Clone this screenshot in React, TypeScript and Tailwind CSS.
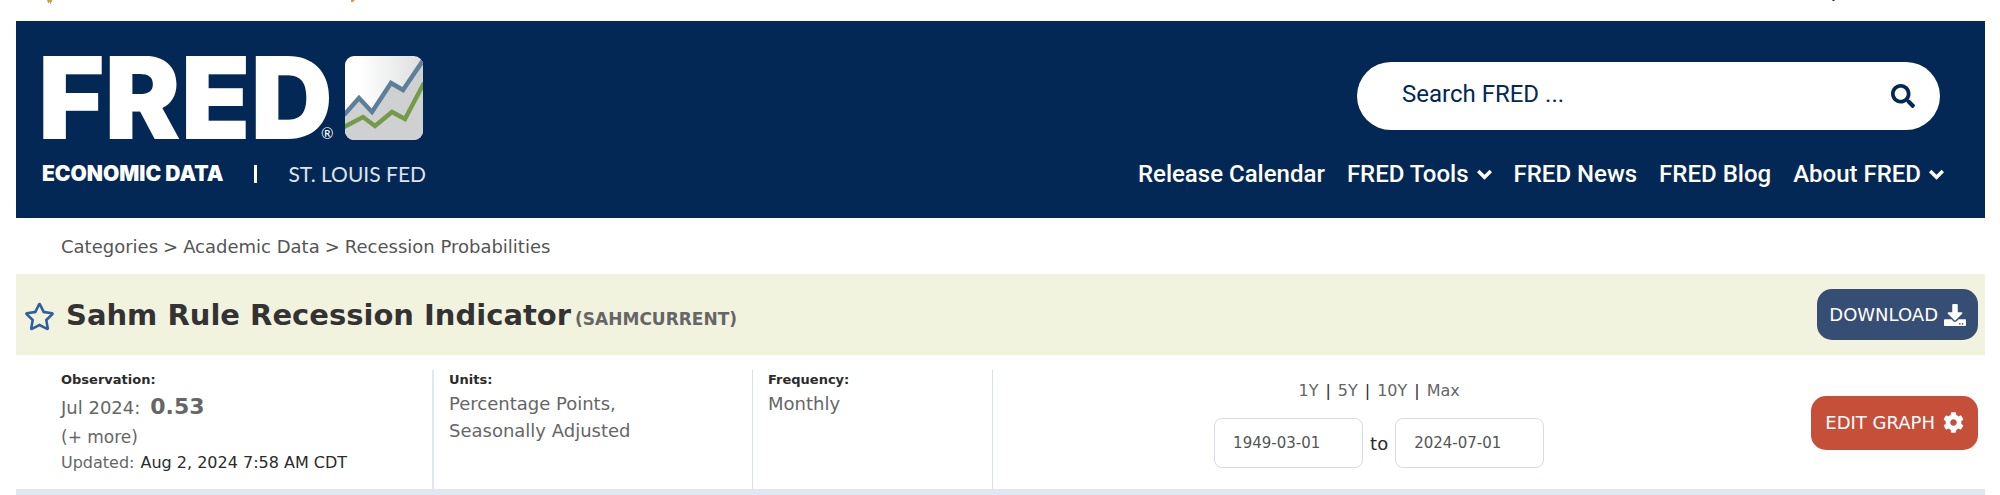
import React from "react";
import { FaSearch, FaDownload, FaCog, FaRegStar } from "react-icons/fa";

const navItems = [
  { label: "Release Calendar", menu: false },
  { label: "FRED Tools", menu: true },
  { label: "FRED News", menu: false },
  { label: "FRED Blog", menu: false },
  { label: "About FRED", menu: true },
];

function TopStrip() {
  return (
    <div className="flex h-[21px] items-start justify-between pr-[150px] pl-[31px]" aria-hidden="true">
      <svg width="308" height="4" viewBox="0 0 308 4" fill="#cf9f45">
        <path d="M0 0h5v2h-1v2h-1v-2h-1v1h-1z" />
        <path d="M304 0h4l-2 2h-2z" />
      </svg>
      <svg width="3" height="2" viewBox="0 0 3 2" fill="#042855">
        <path d="M0 0h3l-1 1h-1z" />
      </svg>
    </div>
  );
}

function Chevron() {
  return (
    <svg width="15" height="11" viewBox="0 0 15 11" fill="none" stroke="currentColor" strokeWidth="3.4" aria-hidden="true">
      <path d="M1.2 2 7.5 8.3 13.8 2" />
    </svg>
  );
}

function ChartMark() {
  return (
    <svg width="78" height="84" viewBox="0 0 78 84" aria-hidden="true">
      <defs>
        <linearGradient id="sky" x1="0" x2="1" y1="0" y2="0">
          <stop offset="0.2" stopColor="#ffffff" />
          <stop offset="1" stopColor="#dcdede" />
        </linearGradient>
        <clipPath id="tile">
          <rect width="78" height="84" rx="9" />
        </clipPath>
      </defs>
      <g clipPath="url(#tile)">
        <rect width="78" height="84" fill="url(#sky)" />
        <path d="M0 58 14 42 27 56 46 27 58 34 78 4V84H0z" fill="#cfd0d2" />
        <path d="M-1 59 14 42 27 56 46 27 58 34 79 3" fill="none" stroke="#5d7f99" strokeWidth="4.4" />
        <path d="M-1 71 18 61 30 70 47 56 60 63 79 27" fill="none" stroke="#739b48" strokeWidth="4.4" />
      </g>
    </svg>
  );
}

function Logo() {
  return (
    <a href="#" className="flex w-[388px] flex-col text-white">
      <span className="flex items-center">
        <span className="w-[283px] font-['Inter',sans-serif] text-[114px] leading-[84px] font-black">FRED</span>
        <span className="self-end font-['Lato',sans-serif] text-[15px] leading-[14px]">®</span>
        <span className="ml-auto pr-[3px]">
          <ChartMark />
        </span>
      </span>
      <span className="mt-[22px] flex items-center justify-between pl-1 leading-6">
        <span className="font-['Inter',sans-serif] text-[21px] font-black">ECONOMIC DATA</span>
        <span className="h-[18px] w-[3px] bg-white" />
        <span className="font-['Lato',sans-serif] text-[21px] text-[#dfe4ea]">ST. LOUIS FED</span>
      </span>
    </a>
  );
}

function Header() {
  return (
    <header className="flex justify-between bg-[#042855] pt-[35px] pr-[41px] pb-8 pl-[22px]">
      <Logo />
      <div className="flex flex-col items-end justify-between pt-[6px] font-['Roboto',sans-serif]">
        <form className="mr-1 flex h-[68px] w-[583px] items-center rounded-full bg-white pr-[25px] pl-[45px] text-[#042855]">
          <input
            type="text"
            aria-label="Search FRED"
            placeholder="Search FRED ..."
            className="min-w-0 flex-1 pb-1 text-[24px] placeholder:text-[#042855] focus:outline-none"
          />
          <button type="button" aria-label="Search">
            <FaSearch size={24} />
          </button>
        </form>
        <nav className="flex gap-[22px] text-[24px] leading-6 font-medium text-white">
          {navItems.map((item) => (
            <a key={item.label} href="#" className="flex items-center gap-2">
              {item.label}
              {item.menu && <Chevron />}
            </a>
          ))}
        </nav>
      </div>
    </header>
  );
}

function Breadcrumb() {
  return (
    <nav aria-label="Breadcrumb" className="flex h-14 items-center gap-[5px] px-[45px] text-[18px] text-[#555]">
      <a href="#">Categories</a>
      <span>&gt;</span>
      <a href="#">Academic Data</a>
      <span>&gt;</span>
      <a href="#">Recession Probabilities</a>
    </nav>
  );
}

function TitleBar() {
  return (
    <div className="flex h-[81px] items-center justify-between bg-[#f2f3de] pr-[7px] pl-2">
      <div className="flex items-center gap-[11px] pt-[3px]">
        <button type="button" aria-label="Add to favorites" className="text-[#2f5f9e]">
          <FaRegStar size={31} />
        </button>
        <h1 className="flex items-baseline gap-1 text-[29px] font-bold text-[#333]">
          Sahm Rule Recession Indicator
          <span className="text-[17px] text-[#666]">(SAHMCURRENT)</span>
        </h1>
      </div>
      <button type="button" className="flex h-[51px] items-center gap-[6px] rounded-[15px] bg-[#374e74] px-3 text-[18px] text-white">
        DOWNLOAD
        <FaDownload size={22} />
      </button>
    </div>
  );
}

function Details() {
  return (
    <section className="flex pt-[15px] pr-[7px] text-[18px] leading-[27px] text-[#666]">
      <div className="w-[418px] border-r-2 border-[#dfe8f0] pb-[13px] pl-[45px]">
        <h2 className="text-[13px] leading-5 font-bold text-[#2b2b2b]">Observation:</h2>
        <p className="flex items-baseline gap-[10px] leading-[34px]">
          Jul 2024: <strong className="text-[22px]">0.53</strong>
        </p>
        <a href="#" className="block text-[17px] leading-6">(+ more)</a>
        <p className="flex gap-[6px] text-[16px]">
          Updated: <span className="text-[#2b2b2b]">Aug 2, 2024 7:58 AM CDT</span>
        </p>
      </div>
      <div className="w-[319px] border-r border-[#d3e2ee] pl-[15px]">
        <h2 className="text-[13px] leading-5 font-bold text-[#2b2b2b]">Units:</h2>
        <p>
          Percentage Points,
          <br />
          Seasonally Adjusted
        </p>
      </div>
      <div className="w-[240px] border-r border-[#d3e2ee] pl-[15px]">
        <h2 className="text-[13px] leading-5 font-bold text-[#2b2b2b]">Frequency:</h2>
        <p>Monthly</p>
      </div>
      <div className="flex flex-1 items-center pb-[14px]">
        <div className="flex flex-1 flex-col items-center gap-[14px] pr-[46px]">
          <div className="flex gap-[7px] text-[16px]">
            <a href="#">1Y</a>
            <span className="text-[#2b2b2b]">|</span>
            <a href="#">5Y</a>
            <span className="text-[#2b2b2b]">|</span>
            <a href="#">10Y</a>
            <span className="text-[#2b2b2b]">|</span>
            <a href="#">Max</a>
          </div>
          <div className="flex items-center gap-[7px] text-[#2b2b2b]">
            <input
              type="text"
              aria-label="Start date"
              defaultValue="1949-03-01"
              className="h-[50px] w-[149px] rounded-[8px] border border-[#d5dce4] pl-[18px] text-[15px] text-[#555]"
            />
            <span>to</span>
            <input
              type="text"
              aria-label="End date"
              defaultValue="2024-07-01"
              className="h-[50px] w-[149px] rounded-[8px] border border-[#d5dce4] pl-[18px] text-[15px] text-[#555]"
            />
          </div>
        </div>
        <button type="button" className="flex h-[54px] items-center gap-2 rounded-[15px] bg-[#c64f3a] px-[14px] text-[18px] text-white">
          EDIT GRAPH
          <FaCog size={21} />
        </button>
      </div>
    </section>
  );
}

export default function App() {
  return (
    <main className="bg-white pr-[15px] pl-4 font-['DejaVu_Sans',Verdana,sans-serif]">
      <TopStrip />
      <Header />
      <Breadcrumb />
      <TitleBar />
      <Details />
      <div className="h-[7px] bg-[#dfe8f0]" />
    </main>
  );
}
